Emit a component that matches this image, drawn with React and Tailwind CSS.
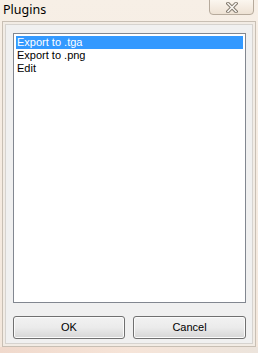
import React from 'react';

const items = ['Export to .tga', 'Export to .png', 'Edit'];

const CloseGlyph = () => (
  <svg width="12" height="11" viewBox="0 0 12 11">
    <path d="M2 1.5 L10 9.5 M10 1.5 L2 9.5" stroke="#7d7468" strokeWidth="3.4" strokeLinecap="square" />
    <path d="M2 1.5 L10 9.5 M10 1.5 L2 9.5" stroke="#f7f4ef" strokeWidth="1.6" strokeLinecap="square" />
  </svg>
);

const Button = ({ children, className }) => (
  <button
    className={`h-[23px] rounded-[3px] border border-[#707070] bg-gradient-to-b from-[#f2f2f2] via-[#ebebeb] to-[#d6d6d6] text-[11px] text-black shadow-[inset_0_0_0_1px_#fbfbfb] ${className}`}
  >
    {children}
  </button>
);

export default function App() {
  return (
    <div className="relative w-[258px] h-[353px] overflow-hidden bg-gradient-to-b from-[#f7efe6] to-[#f3e7dc] font-['Liberation_Sans',Arial,sans-serif]">
      {/* title bar */}
      <div className="h-[21px] flex items-center pl-[3px] pb-[1px]">
        <span className="text-[12.5px] text-black font-['Noto_Sans',sans-serif] leading-none">Plugins</span>
      </div>
      <div className="absolute right-[4px] top-[-1px] w-[45px] h-[16px] rounded-b-[4px] border border-[#b6aa9c] bg-gradient-to-b from-[#fbf6ef] to-[#eee2d4] flex items-center justify-center">
        <CloseGlyph />
      </div>

      {/* frame */}
      <div className="mx-[2px] h-[326px] border border-[#c8bfb4] bg-[#f2ece5] p-[2px]">
        <div className="h-full border border-[#d6d3cf] bg-[#f0f0f0] pl-[7px] pt-[8px]">
          <div className="w-[233px] h-[270px] border border-[#828790] bg-white p-[2px]">
            {items.map((t, i) => (
              <div
                key={t}
                className={`h-[13px] pl-[1px] text-[11px] leading-[13px] ${
                  i === 0 ? 'bg-[#3399ff] text-white' : 'text-black'
                }`}
              >
                {t}
              </div>
            ))}
          </div>
          <div className="flex gap-[8px] mt-[13px]">
            <Button className="w-[112px]">OK</Button>
            <Button className="w-[113px]">Cancel</Button>
          </div>
        </div>
      </div>

      {/* desktop below */}
      <div className="h-[6px] bg-gradient-to-r from-[#f0d9cc] via-[#f6e4d8] to-[#ece4dc]" />
    </div>
  );
}
